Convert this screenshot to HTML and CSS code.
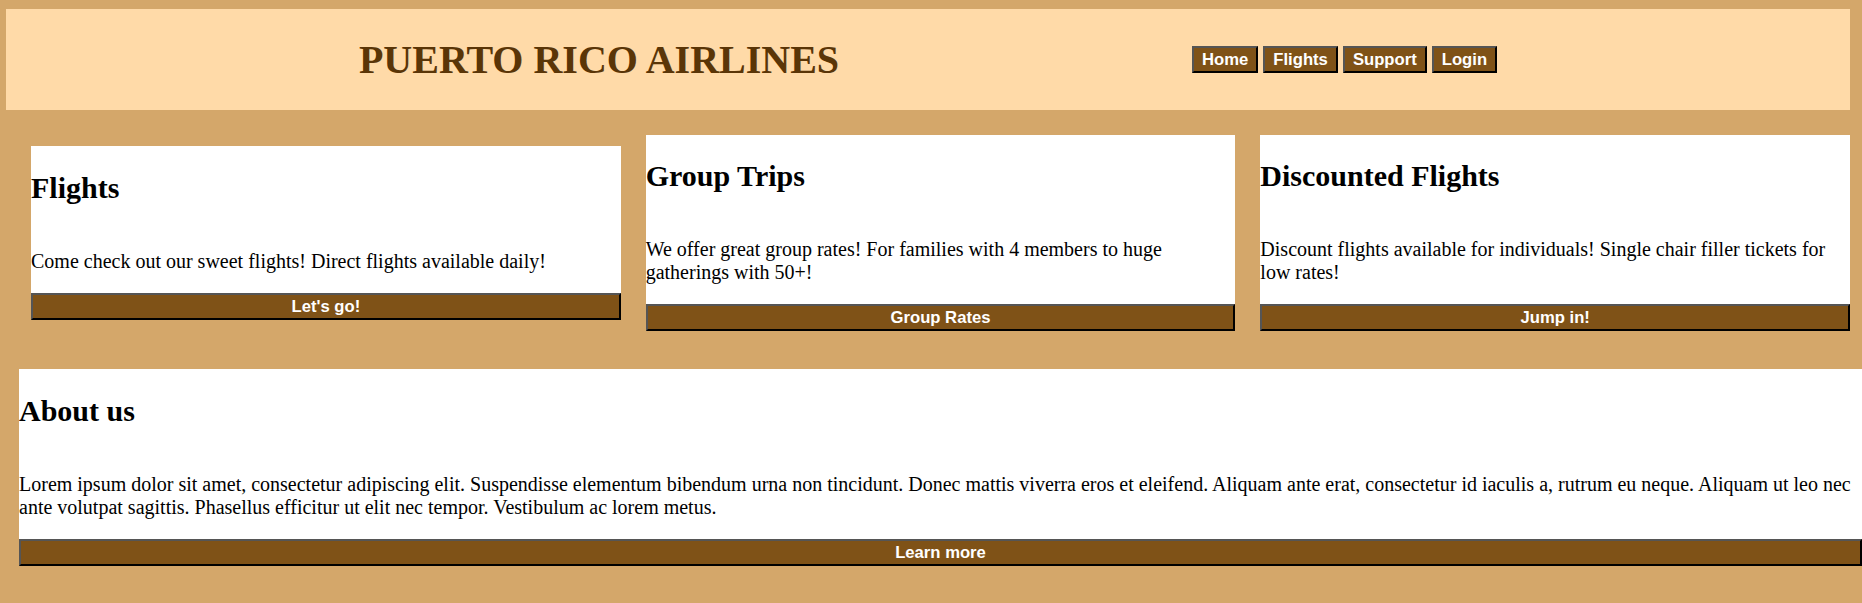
FILE: index.html
```html
<!DOCTYPE html>
<html lang="en">
<head>
<meta charset="utf-8">
<title>Puerto Rico Airlines</title>
<link rel="stylesheet" href="styles.css">
</head>
<body>
<header class="site-header">
  <h1 class="brand">PUERTO RICO AIRLINES</h1>
  <nav class="nav">
    <button class="btn nav-btn">Home</button>
    <button class="btn nav-btn">Flights</button>
    <button class="btn nav-btn">Support</button>
    <button class="btn nav-btn">Login</button>
  </nav>
</header>

<section class="cards">
  <div class="card">
    <h2>Flights</h2>
    <p>Come check out our sweet flights! Direct flights available daily!</p>
    <button class="btn card-btn">Let's go!</button>
  </div>
  <div class="card">
    <h2>Group Trips</h2>
    <p>We offer great group rates! For families with 4 members to huge gatherings with 50+!</p>
    <button class="btn card-btn">Group Rates</button>
  </div>
  <div class="card">
    <h2>Discounted Flights</h2>
    <p>Discount flights available for individuals! Single chair filler tickets for low rates!</p>
    <button class="btn card-btn">Jump in!</button>
  </div>
</section>

<section class="card about">
  <h2>About us</h2>
  <p>Lorem ipsum dolor sit amet, consectetur adipiscing elit. Suspendisse elementum bibendum urna non tincidunt. Donec mattis viverra eros et eleifend. Aliquam ante erat, consectetur id iaculis a, rutrum eu neque. Aliquam ut leo nec ante volutpat sagittis. Phasellus efficitur ut elit nec tempor. Vestibulum ac lorem metus.</p>
  <button class="btn card-btn">Learn more</button>
</section>
</body>
</html>
```

FILE: styles.css
```css
html, body {
  overflow-x: hidden;
}

body {
  margin: 0;
  background: #d4a76a;
  font-family: "Liberation Serif", "Times New Roman", serif;
  font-size: 20px;
  color: #000;
}

.site-header {
  display: flex;
  justify-content: space-evenly;
  align-items: center;
  margin: 9px 12px 0 6px;
  background: #ffdaa8;
}

.brand {
  margin: 0.67em 0;
  font-size: 40px;
  font-weight: bold;
  color: #5a3507;
}

.nav {
  display: flex;
  gap: 5px;
}

.btn {
  font-family: "Liberation Sans", Arial, sans-serif;
  font-size: 16.67px;
  font-weight: bold;
  line-height: 19px;
  color: #fff;
  background: #7f5217;
  border-style: solid;
  border-width: 2px;
  border-color: #555 #000 #000 #555;
  padding: 2px 8px;
  margin: 0;
  cursor: pointer;
}

.cards {
  display: flex;
  align-items: center;
  gap: 25px;
  margin: 25px 12px 0 6px;
  padding-left: 25px;
}

.card {
  flex: 1;
  display: flex;
  flex-direction: column;
  background: #fff;
}

.card h2 {
  font-size: 30px;
  font-weight: bold;
  margin: 0.83em 0;
}

.card p {
  margin: 20px 0;
}

.card-btn {
  width: 100%;
  text-align: center;
}

.about {
  margin: 38px 0 0 19px;
}
```
